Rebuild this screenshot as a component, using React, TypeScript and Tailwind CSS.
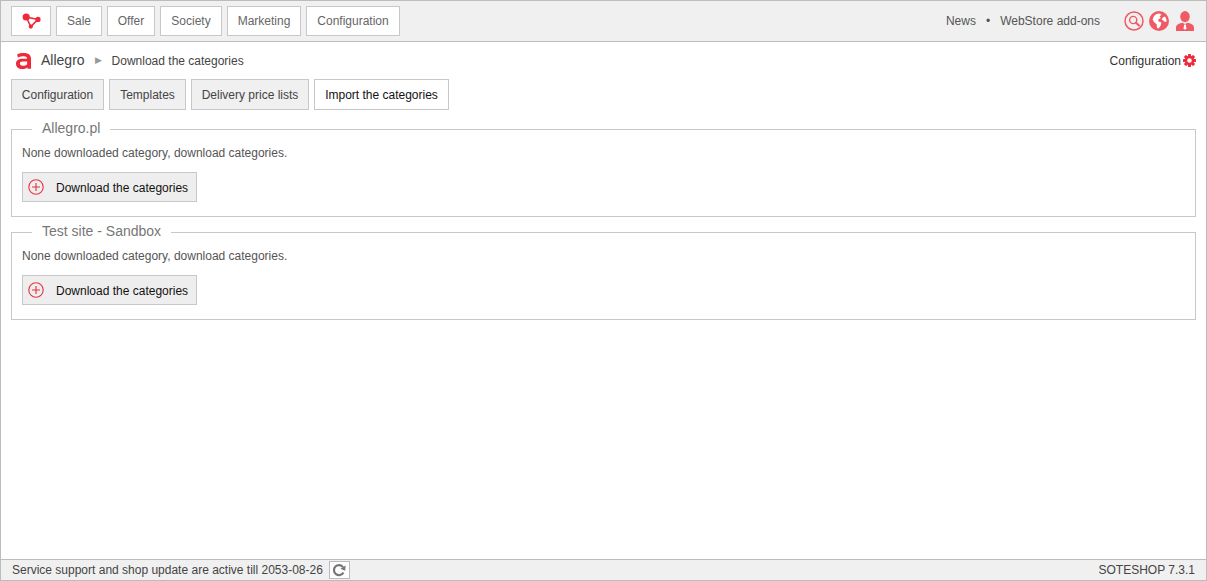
import React from "react";

const Logo = () => (
  <svg width="19" height="16" viewBox="0 0 19 16">
    <path d="M4.2 4 L16 6.4 L8.8 13.6 Z" fill="none" stroke="#ee2a3a" strokeWidth="1.5" />
    <circle cx="4.2" cy="4" r="3.6" fill="#ee2a3a" />
    <circle cx="16" cy="6.4" r="2.6" fill="#ee2a3a" />
    <circle cx="8.8" cy="13.6" r="2.1" fill="#ee2a3a" />
  </svg>
);

const AllegroA = () => (
  <svg width="15" height="16" viewBox="1.6 2 12.4 13.8" preserveAspectRatio="none">
    <path
      d="M2.5 3.2 C4 2.4 6 2 8 2 C12 2 14 3.8 14 7 V15.5 H11.2 L11 14.4 C9.8 15.4 8.4 15.8 6.8 15.8 C3.8 15.8 1.6 14 1.6 11.2 C1.6 8.4 3.8 6.9 7 6.9 H10.8 C10.7 5.5 9.7 4.9 7.9 4.9 C6.3 4.9 4.8 5.2 3.2 5.9 Z M10.8 9.4 H7.2 C5.6 9.4 4.8 10 4.8 11.1 C4.8 12.3 5.7 13 7.2 13 C8.6 13 9.9 12.5 10.8 11.6 Z"
      fill="#ee2a3a"
    />
  </svg>
);

const SearchIcon = () => (
  <svg width="20" height="20" viewBox="0 0 20 20" fill="none" stroke="#f05a64">
    <circle cx="10" cy="10" r="9" strokeWidth="1.5" />
    <circle cx="9.2" cy="9" r="3.6" strokeWidth="1.4" />
    <path d="M11.9 11.7 L15 14.6" strokeWidth="2" strokeLinecap="round" />
  </svg>
);

const GlobeIcon = () => (
  <svg width="20" height="20" viewBox="0 0 20 20">
    <circle cx="10" cy="10" r="10" fill="#f05a64" />
    <path
      d="M7.5 3 L10.5 2.4 L12.6 3.8 L10.6 5.2 L11.8 7 L9.2 8.4 L9.6 10.4 L12.4 11.6 L11.6 14.8 L9.6 17.4 L8 16.8 L7.6 13.2 L5.2 11.2 L3.6 8.4 L5 5 Z M14 6.2 L16 5.6 L17.4 8.4 L17.6 10.8 L15.4 10.8 L14 9.2 L12.6 8.8 Z"
      fill="#fff"
    />
  </svg>
);

const UserIcon = () => (
  <svg width="18" height="20" viewBox="0 0 18 20">
    <ellipse cx="9" cy="5.6" rx="4.8" ry="5.6" fill="#f05a64" />
    <path d="M0 20 V16.4 C0 13.8 3 12.6 6.4 11.8 L9 13 L11.6 11.8 C15 12.6 18 13.8 18 16.4 V20 Z" fill="#f05a64" />
    <path d="M8.2 13.4 H9.8 L10.4 17.2 L9 19 L7.6 17.2 Z" fill="#fff" />
  </svg>
);

const Gear = () => (
  <svg width="13" height="13" viewBox="0 0 13 13">
    <g fill="#ee2a3a">
      <rect x="5" y="0" width="3" height="13" rx="0.6" />
      <rect x="5" y="0" width="3" height="13" rx="0.6" transform="rotate(45 6.5 6.5)" />
      <rect x="5" y="0" width="3" height="13" rx="0.6" transform="rotate(90 6.5 6.5)" />
      <rect x="5" y="0" width="3" height="13" rx="0.6" transform="rotate(135 6.5 6.5)" />
      <circle cx="6.5" cy="6.5" r="4.7" />
    </g>
    <circle cx="6.5" cy="6.5" r="2.3" fill="#fff" />
  </svg>
);

const PlusCircle = () => (
  <svg width="16" height="16" viewBox="0 0 16 16" fill="none" stroke="#e8303f" strokeWidth="1.1">
    <circle cx="8" cy="8" r="7.2" />
    <path d="M8 4 V12 M4 8 H12" />
  </svg>
);

const Refresh = () => (
  <svg width="14" height="14" viewBox="0 0 14 14" fill="none">
    <path d="M11.4 9.4 A5 5 0 1 1 11 4.2" stroke="#777" strokeWidth="2.2" />
    <path d="M13.6 2.6 L13.2 7.8 L8.4 5.8 Z" fill="#777" />
  </svg>
);

const nav = ["Sale", "Offer", "Society", "Marketing", "Configuration"];

const tabs = [
  { label: "Configuration", cls: "w-[93px] bg-[#f0f0f0] text-[#444]" },
  { label: "Templates", cls: "w-[77px] bg-[#f0f0f0] text-[#444]" },
  { label: "Delivery price lists", cls: "w-[118px] bg-[#f0f0f0] text-[#444]" },
  { label: "Import the categories", cls: "w-[135px] bg-white text-[#111]" },
];

const navWidths: Record<string, string> = {
  Sale: "w-[46px]",
  Offer: "w-[48px]",
  Society: "w-[62px]",
  Marketing: "w-[74px]",
  Configuration: "w-[94px]",
};

const Section = ({ title }: { title: string }) => (
  <fieldset className="h-[96px] min-w-0 border border-[#c8c8c8] px-[10px]">
    <legend className="ml-[10px] px-[10px] pb-[2px] text-[14px] leading-[14px] text-[#777]">{title}</legend>
    <p className="mt-[9px] text-[12px] leading-[14px] text-[#555]">None downloaded category, download categories.</p>
    <button className="mt-[12px] flex h-[30px] w-[175px] items-center border border-[#c8c8c8] bg-[#eeeeee] pl-[5px] text-[12px] text-[#111]">
      <PlusCircle />
      <span className="ml-[12px] pt-[1px]">Download the categories</span>
    </button>
  </fieldset>
);

export default function App() {
  return (
    <div className="flex h-[581px] w-[1207px] flex-col overflow-hidden border border-[#bcbcbc] bg-white font-['Liberation_Sans',Arial,sans-serif] text-[12px]">
      <header className="flex h-[41px] shrink-0 items-center border-b border-[#bcbcbc] bg-[#f0f0f0] pl-[10px] pr-[12px]">
        <div className="flex gap-[5px]">
          <div className="flex h-[30px] w-[40px] items-center justify-center border border-[#c8c8c8] bg-white">
            <Logo />
          </div>
          {nav.map((n) => (
            <div
              key={n}
              className={`flex h-[30px] items-center justify-center border border-[#c8c8c8] bg-white text-[#666] ${navWidths[n]}`}
            >
              {n}
            </div>
          ))}
        </div>
        <div className="ml-auto flex items-center text-[#555]">
          <span>News</span>
          <span className="mx-[10px] text-[12px]">•</span>
          <span>WebStore add-ons</span>
          <div className="ml-[24px] flex items-center gap-[5px]">
            <SearchIcon />
            <GlobeIcon />
            <div className="ml-[2px]">
              <UserIcon />
            </div>
          </div>
        </div>
      </header>

      <main className="flex-1 px-[10px]">
        <div className="flex h-[37px] items-center">
          <div className="ml-[5px] mt-[1px]">
            <AllegroA />
          </div>
          <span className="ml-[10px] text-[14px] text-[#444]">Allegro</span>
          <span className="ml-[10px] text-[9px] text-[#999]">▶</span>
          <span className="ml-[10px] text-[#444]">Download the categories</span>
          <span className="ml-auto text-[#333]">Configuration</span>
          <span className="ml-[2px]">
            <Gear />
          </span>
        </div>
        <div className="flex gap-[5px]">
          {tabs.map((t) => (
            <div
              key={t.label}
              className={`flex h-[31px] items-center justify-center border border-[#c8c8c8] ${t.cls}`}
            >
              {t.label}
            </div>
          ))}
        </div>
        <div className="mt-[11px] flex flex-col gap-[7px]">
          <Section title="Allegro.pl" />
          <Section title="Test site - Sandbox" />
        </div>
      </main>

      <footer className="flex h-[21px] shrink-0 items-center border-t border-[#bcbcbc] bg-[#f0f0f0] pl-[11px] pr-[11px] text-[#444]">
        <span>Service support and shop update are active till 2053-08-26</span>
        <span className="ml-[6px] flex h-[18px] w-[21px] items-center justify-center border border-[#bbb] bg-white">
          <Refresh />
        </span>
        <span className="ml-auto">SOTESHOP 7.3.1</span>
      </footer>
    </div>
  );
}
